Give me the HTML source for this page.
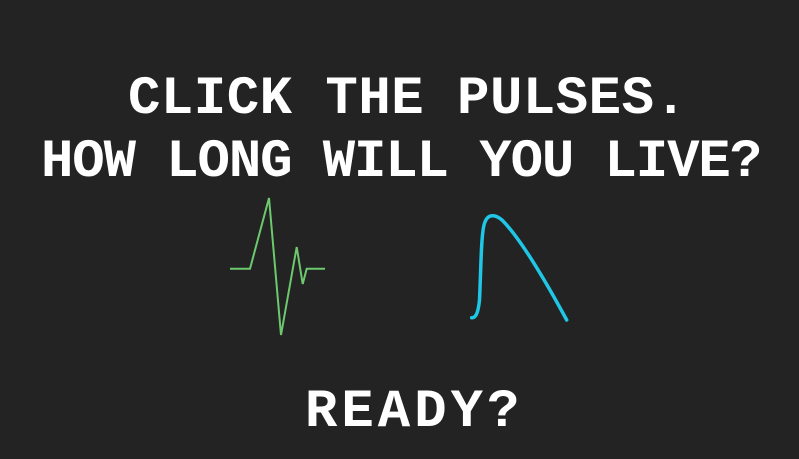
<!DOCTYPE html>
<html><head><meta charset="utf-8"><style>
html,body{margin:0;padding:0;}
body{width:799px;height:459px;background:#232323;position:relative;overflow:hidden;}
.t{position:absolute;color:#fff;font-family:"Liberation Mono",monospace;font-weight:bold;font-size:54px;line-height:1;white-space:nowrap;}
</style></head><body>
<div class="t" style="left:128px;top:73px;letter-spacing:0.5px;">CLICK THE PULSES.</div>
<div class="t" style="left:41px;top:136px;letter-spacing:-1.1px;">HOW LONG WILL YOU LIVE?</div>
<div class="t" style="left:305px;top:386px;letter-spacing:4px;">READY?</div>
<svg width="799" height="459" style="position:absolute;left:0;top:0">
<polyline points="230,268.7 250,268.7 269,198 281,335 296.7,247 302.7,284 306.7,268.7 325,268.7" fill="none" stroke="#6cc96e" stroke-width="2" stroke-linejoin="miter"/>
<path d="M471.7,317.7 C475,318 478,315 479.5,300 C481,270 481,230 485,222 C488,214 495,214 502,220 C520,238 545,280 566.7,320" fill="none" stroke="#1fc6e6" stroke-width="3.5" stroke-linecap="round"/>
</svg>
</body></html>
